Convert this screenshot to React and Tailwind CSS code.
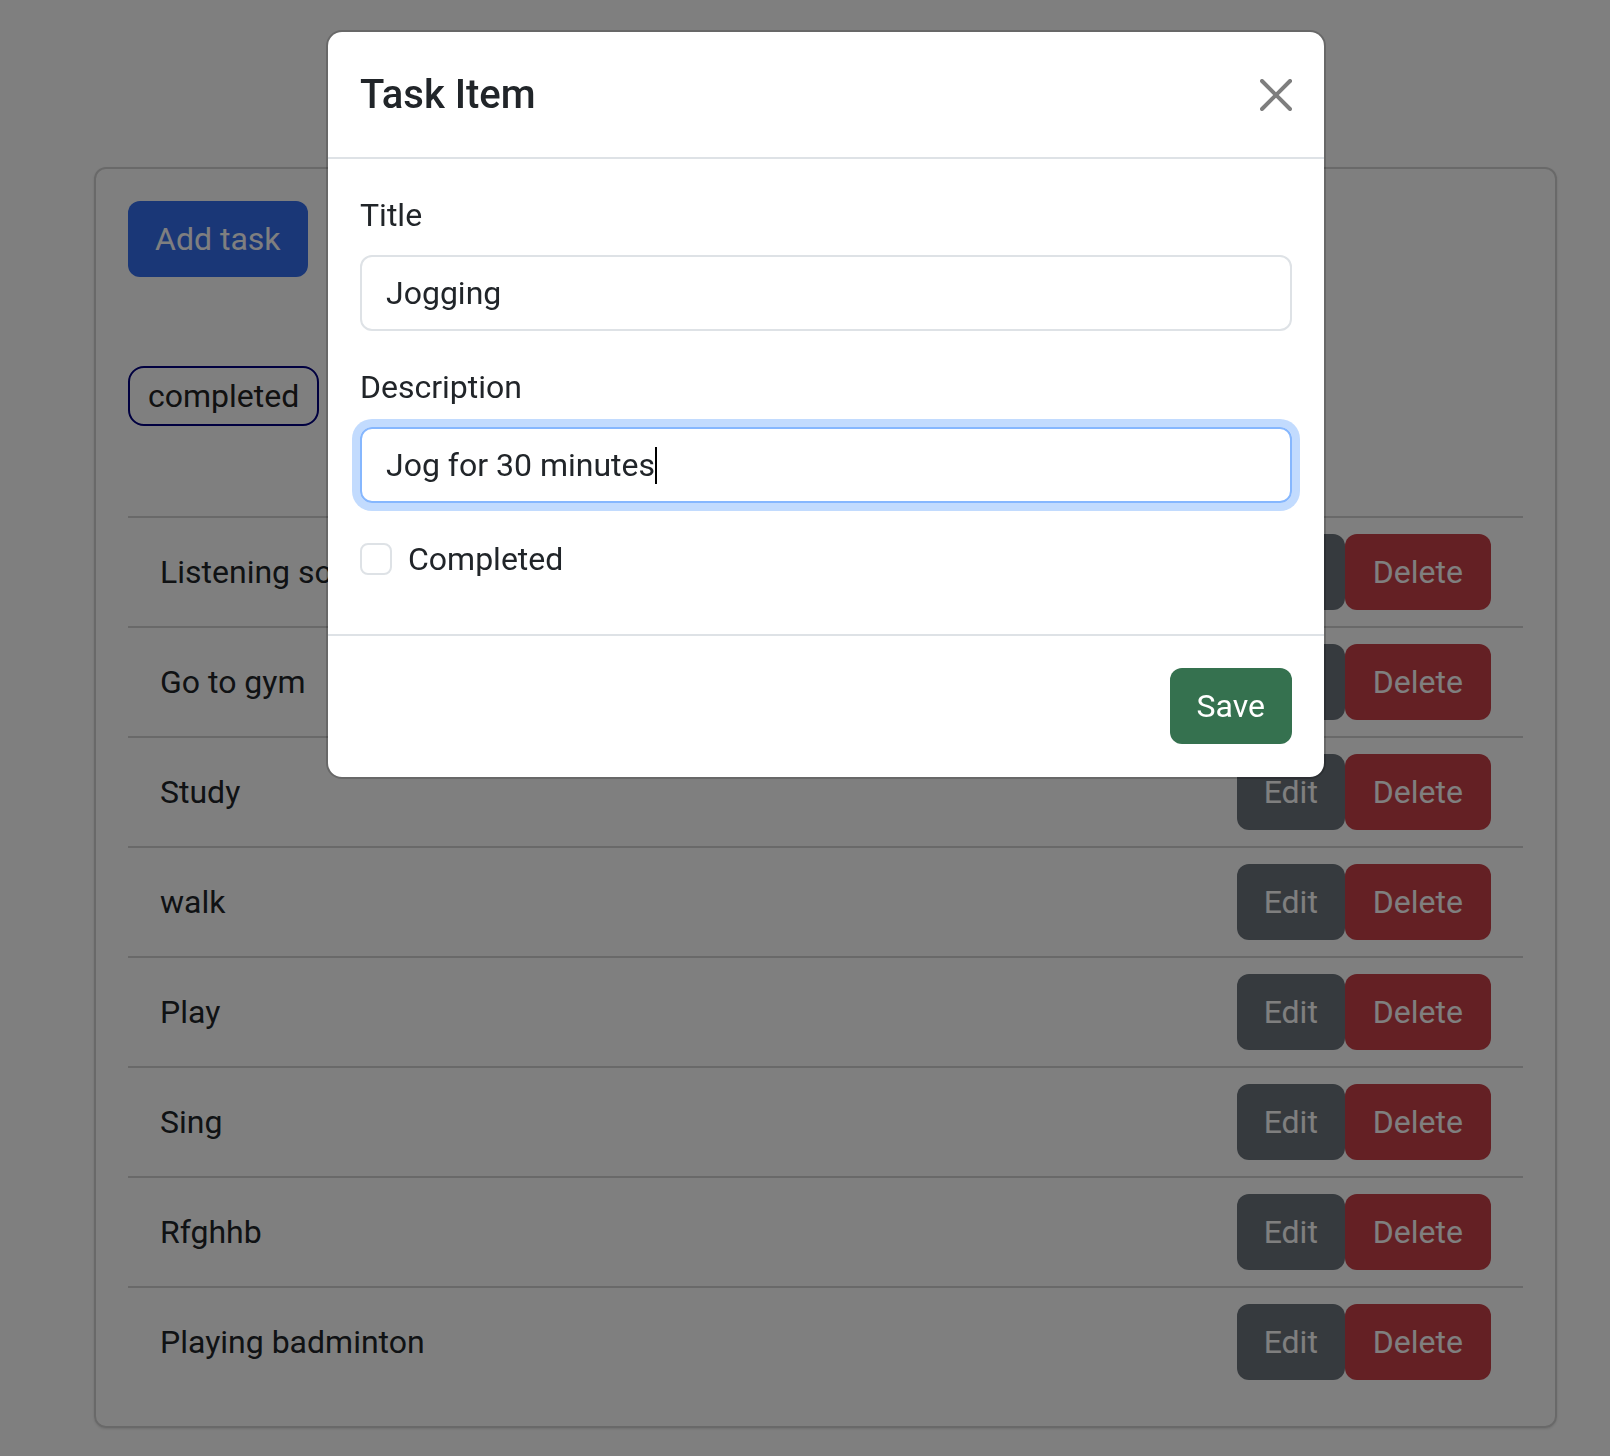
import React from 'react';

const tasks = [
    'Listening songs',
    'Go to gym',
    'Study',
    'walk',
    'Play',
    'Sing',
    'Rfghhb',
    'Playing badminton',
];

function CloseIcon() {
    return (
        <svg viewBox="0 0 16 16" className="w-[32px] h-[32px] opacity-50" fill="#000">
            <path d="M.293.293a1 1 0 0 1 1.414 0L8 6.586 14.293.293a1 1 0 1 1 1.414 1.414L9.414 8l6.293 6.293a1 1 0 0 1-1.414 1.414L8 9.414l-6.293 6.293a1 1 0 0 1-1.414-1.414L6.586 8 .293 1.707a1 1 0 0 1 0-1.414z" />
        </svg>
    );
}

export default function App() {
    return (
        <div className="relative min-h-screen bg-white font-[Roboto,sans-serif] text-[#212529]">
            {/* Task list page */}
            <div className="pt-[167px] pl-[94px] pb-[28px]">
                <div className="w-[1463px] border-2 border-[#d3d3d3] rounded-[12px] px-[32px] pt-[32px] pb-[30px] shadow-sm">
                    <button className="h-[76px] px-[25px] border-2 border-transparent rounded-[12px] bg-[#346eef] text-white text-[32px] leading-[48px]">
                        Add task
                    </button>

                    <div className="mt-[89px]">
                        <button className="h-[60px] px-[18px] border-2 border-[#000080] rounded-[16px] text-[#222] text-[32px] leading-[48px]">
                            completed
                        </button>
                    </div>

                    {/* Tasks */}
                    <ul className="mt-[90px]">
                        {tasks.map((task) => (
                            <li
                                key={task}
                                className="flex items-center justify-between border-t-2 border-[#d3d3d3] px-[32px] py-[16px]"
                            >
                                <span className="text-[32px] leading-[48px]">{task}</span>
                                <div className="flex">
                                    <button className="h-[76px] px-[25px] border-2 border-transparent rounded-[12px] bg-[#6c757d] text-white text-[32px] leading-[48px]">
                                        Edit
                                    </button>
                                    <button className="h-[76px] px-[26px] border-2 border-transparent rounded-[12px] bg-[#c94048] text-white text-[32px] leading-[48px]">
                                        Delete
                                    </button>
                                </div>
                            </li>
                        ))}
                    </ul>
                </div>
            </div>

            {/* Backdrop */}
            <div className="fixed inset-0 bg-black/50"></div>

            {/* Modal */}
            <div className="absolute left-[326px] top-[30px] w-[1000px] bg-white bg-clip-padding border-2 border-[rgba(0,0,0,0.175)] rounded-[16px]">
                <div className="flex items-center justify-between h-[127px] pl-[32px] pr-[32px] border-b-2 border-[#dee2e6]">
                    <h5 className="text-[40px] leading-[48px] font-medium">Task Item</h5>
                    <button className="flex items-center justify-center">
                        <CloseIcon />
                    </button>
                </div>

                <div className="px-[32px] pt-[32px] pb-[51px]">
                    <div className="mb-[32px]">
                        <label className="block mb-[16px] text-[32px] leading-[48px]">Title</label>
                        <input
                            readOnly
                            value="Jogging"
                            className="block w-full h-[76px] px-[24px] border-2 border-[#dee2e6] rounded-[12px] text-[32px] leading-[48px] text-[#212529] outline-none"
                        />
                    </div>
                    <div className="mb-[32px]">
                        <label className="block mb-[16px] text-[32px] leading-[48px]">Description</label>
                        <div className="flex items-center w-full h-[76px] px-[24px] border-2 border-[#86b7fe] rounded-[12px] shadow-[0_0_0_8px_rgba(13,110,253,0.25)] text-[32px] leading-[48px]">
                            <span>Jog for 30 minutes</span>
                            <span className="inline-block w-[2px] h-[37px] bg-black"></span>
                        </div>
                    </div>
                    <div className="flex items-start h-[48px]">
                        <span className="mt-[8px] w-[32px] h-[32px] border-2 border-[#dee2e6] rounded-[8px] bg-white"></span>
                        <label className="ml-[16px] text-[32px] leading-[48px]">Completed</label>
                    </div>
                </div>

                <div className="flex justify-end border-t-2 border-[#dee2e6] px-[32px] pt-[32px] pb-[33px]">
                    <button className="h-[76px] px-[25px] border-2 border-transparent rounded-[12px] bg-[#35714f] text-white text-[32px] leading-[48px]">
                        Save
                    </button>
                </div>
            </div>
        </div>
    );
}
